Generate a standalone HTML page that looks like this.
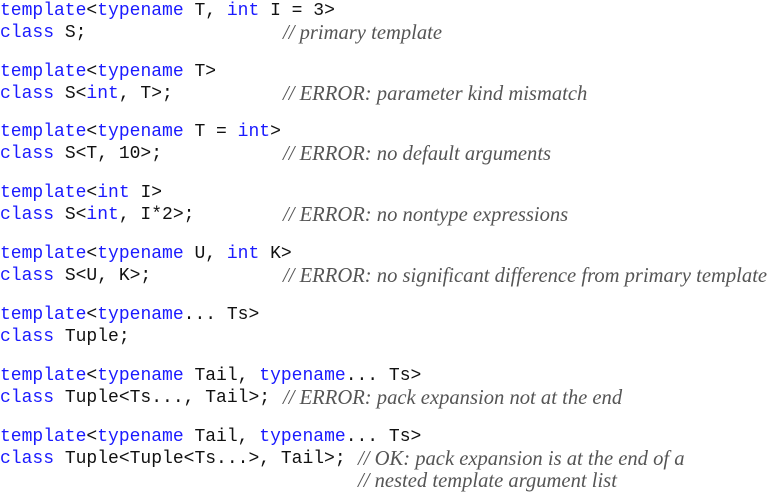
<!DOCTYPE html>
<html><head><meta charset="utf-8"><style>
html,body{margin:0;padding:0;background:#fff;width:768px;height:499px;overflow:hidden}
.b{position:absolute;left:0;font-family:"Liberation Mono",monospace;font-size:18px;line-height:22px;white-space:pre;color:#111}
.k{color:#1a1aff}
.c{position:absolute;left:283px;font-family:"Liberation Serif",serif;font-style:italic;font-size:20.6px;line-height:22px;color:#555;white-space:pre}
</style></head><body>
<div class="b" style="top:0px"><span class="k">template</span>&lt;<span class="k">typename</span> T, <span class="k">int</span> I = 3&gt;
<span class="k">class</span> S;<span class="c" style="top:22px">// primary template</span></div>
<div class="b" style="top:61px"><span class="k">template</span>&lt;<span class="k">typename</span> T&gt;
<span class="k">class</span> S&lt;<span class="k">int</span>, T&gt;;<span class="c" style="top:22px">// ERROR: parameter kind mismatch</span></div>
<div class="b" style="top:121px"><span class="k">template</span>&lt;<span class="k">typename</span> T = <span class="k">int</span>&gt;
<span class="k">class</span> S&lt;T, 10&gt;;<span class="c" style="top:22px">// ERROR: no default arguments</span></div>
<div class="b" style="top:182px"><span class="k">template</span>&lt;<span class="k">int</span> I&gt;
<span class="k">class</span> S&lt;<span class="k">int</span>, I*2&gt;;<span class="c" style="top:22px">// ERROR: no nontype expressions</span></div>
<div class="b" style="top:243px"><span class="k">template</span>&lt;<span class="k">typename</span> U, <span class="k">int</span> K&gt;
<span class="k">class</span> S&lt;U, K&gt;;<span class="c" style="top:22px">// ERROR: no significant difference from primary template</span></div>
<div class="b" style="top:304px"><span class="k">template</span>&lt;<span class="k">typename</span>... Ts&gt;
<span class="k">class</span> Tuple;</div>
<div class="b" style="top:365px"><span class="k">template</span>&lt;<span class="k">typename</span> Tail, <span class="k">typename</span>... Ts&gt;
<span class="k">class</span> Tuple&lt;Ts..., Tail&gt;;<span class="c" style="top:22px">// ERROR: pack expansion not at the end</span></div>
<div class="b" style="top:426px"><span class="k">template</span>&lt;<span class="k">typename</span> Tail, <span class="k">typename</span>... Ts&gt;
<span class="k">class</span> Tuple&lt;Tuple&lt;Ts...&gt;, Tail&gt;;<span class="c" style="top:22px;left:358px">// OK: pack expansion is at the end of a
// nested template argument list</span></div>
</body></html>
